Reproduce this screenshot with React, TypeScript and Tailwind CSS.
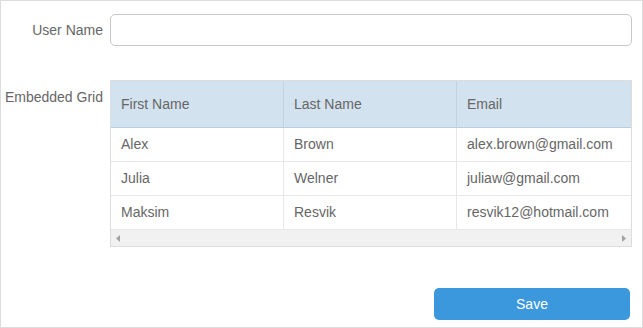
import React from 'react';

const rows = [
  { first: 'Alex', last: 'Brown', email: 'alex.brown@gmail.com' },
  { first: 'Julia', last: 'Welner', email: 'juliaw@gmail.com' },
  { first: 'Maksim', last: 'Resvik', email: 'resvik12@hotmail.com' },
];

export default function App() {
  return (
    <div className="w-[643px] h-[328px] bg-white font-['Liberation_Sans',Arial,sans-serif] text-[14px] text-[#666]">
      <div className="h-full border border-[#dcdcdc] pt-[13px] pr-[10px] flex flex-col">
        {/* user name row */}
        <div className="flex items-center">
          <label className="w-[109px] pr-[7px] text-right">User Name</label>
          <input
            type="text"
            className="flex-1 h-[32px] border border-[#c8c8c8] rounded-[5px] px-2 outline-none"
          />
        </div>

        {/* grid row */}
        <div className="flex mt-[34px]">
          <label className="w-[109px] pr-[7px] text-right pt-[8px] leading-[18px]">Embedded Grid</label>
          <div className="flex-1 border border-[#dddddd] overflow-hidden">
            <div className="grid grid-cols-[173px_173px_173px] bg-[#d3e2ef] border-b border-[#b9cfe0] h-[47px] items-stretch">
              <div className="px-[10px] flex items-center border-r border-[#c3d3e1]">First Name</div>
              <div className="px-[10px] flex items-center border-r border-[#c3d3e1]">Last Name</div>
              <div className="px-[10px] flex items-center whitespace-nowrap">Email</div>
            </div>
            {rows.map((r) => (
              <div key={r.first} className="grid grid-cols-[173px_173px_173px] h-[34px] border-b border-[#e8e8e8] last:border-b-0">
                <div className="px-[10px] flex items-center border-r border-[#e8e8e8]">{r.first}</div>
                <div className="px-[10px] flex items-center border-r border-[#e8e8e8]">{r.last}</div>
                <div className="px-[10px] flex items-center whitespace-nowrap">{r.email}</div>
              </div>
            ))}
            <div className="h-[16px] bg-[#f1f1f1] flex items-center justify-between px-[5px]">
              <svg width="4" height="7" viewBox="0 0 4 7"><path d="M4 0 L0 3.5 L4 7 Z" fill="#a3a3a3" /></svg>
              <svg width="4" height="7" viewBox="0 0 4 7"><path d="M0 0 L4 3.5 L0 7 Z" fill="#a3a3a3" /></svg>
            </div>
          </div>
        </div>

        <div className="flex justify-end mt-auto mb-[7px] pr-[2px]">
          <button className="w-[196px] h-[32px] bg-[#3b98dc] text-white rounded-[5px]">Save</button>
        </div>
      </div>
    </div>
  );
}
